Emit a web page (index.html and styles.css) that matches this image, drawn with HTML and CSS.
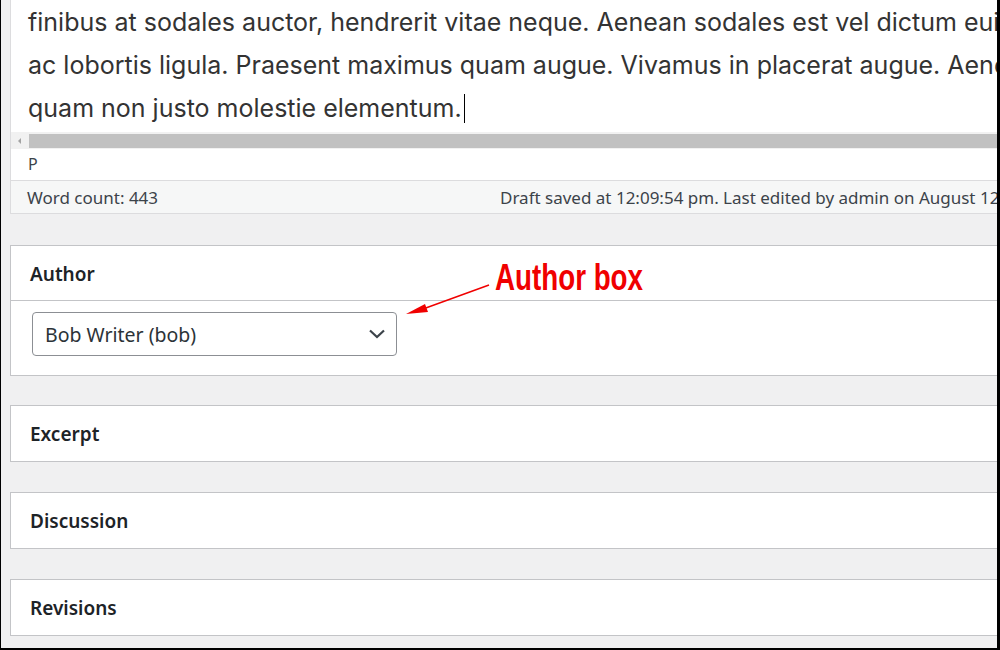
FILE: index.html
```html
<!DOCTYPE html>
<html>
<head>
<meta charset="utf-8">
<link rel="stylesheet" href="styles.css">
</head>
<body>
<div class="frame">
  <div class="column">
    <div class="editor">
      <div class="content">
        <div class="line">finibus at sodales auctor, hendrerit vitae neque. Aenean sodales est vel dictum euismod. Donec at</div>
        <div class="line">ac lobortis ligula. Praesent maximus quam augue. Vivamus in placerat augue. Aenean non</div>
        <div class="line">quam non justo molestie elementum.<span class="caret"></span></div>
      </div>
      <div class="hscroll">
        <span class="scroll-arrow"></span>
        <span class="scroll-thumb"></span>
      </div>
      <div class="pathbar">p</div>
      <div class="statusbar">
        <span class="wordcount">Word count: 443</span>
        <span class="draft">Draft saved at 12:09:54 pm. Last edited by admin on August 12, 2020 at 11:48 am</span>
      </div>
    </div>

    <div class="postbox author-box">
      <div class="postbox-header"><h2>Author</h2></div>
      <div class="postbox-body">
        <div class="select">
          <span>Bob Writer (bob)</span>
          <svg class="chevron" width="18" height="12" viewBox="0 0 18 12"><path d="M2 2.5 L9 9 L16 2.5" fill="none" stroke="#3c434a" stroke-width="2.2"/></svg>
        </div>
      </div>
      <div class="annotation">
        <span class="annotation-label">Author box</span>
        <svg class="annotation-arrow" width="100" height="40" viewBox="0 0 100 40">
          <line x1="84" y1="5" x2="18" y2="29" stroke="#f00000" stroke-width="1.6"/>
          <polygon points="1,34 20,24 23,32" fill="#f00000"/>
        </svg>
      </div>
    </div>

    <div class="postbox excerpt-box"><div class="postbox-header closed"><h2>Excerpt</h2></div></div>
    <div class="postbox"><div class="postbox-header closed"><h2>Discussion</h2></div></div>
    <div class="postbox"><div class="postbox-header closed"><h2>Revisions</h2></div></div>
  </div>
</div>
</body>
</html>
```

FILE: styles.css
```css
html, body {
  margin: 0;
  padding: 0;
  background: #f0f0f1;
}
.frame {
  box-sizing: border-box;
  width: 1000px;
  height: 650px;
  border-left: 1px solid #000;
  border-right: 3px solid #000;
  border-bottom: 2px solid #000;
  overflow: hidden;
  background: #f0f0f1;
}
.column {
  width: 1100px;
  padding-left: 9px;
  display: flex;
  flex-direction: column;
}
.editor {
  background: #fff;
  border-left: 1px solid #dcdcde;
  border-right: 1px solid #dcdcde;
  border-bottom: 1px solid #dcdcde;
  display: flex;
  flex-direction: column;
}
.content {
  height: 132px;
  padding: 1px 0 0 17px;
  box-sizing: border-box;
  font-family: Inter, "Noto Sans", sans-serif;
  font-size: 25px;
  line-height: 43px;
  color: #333;
  overflow: hidden;
}
.line {
  white-space: nowrap;
}
.caret {
  display: inline-block;
  width: 1px;
  height: 29px;
  background: #000;
  vertical-align: -6px;
  margin-left: 2px;
}
.hscroll {
  height: 17px;
  background: #f1f1f1;
  display: flex;
  align-items: center;
}
.scroll-arrow {
  width: 0;
  height: 0;
  margin-left: 7px;
  border-top: 3px solid transparent;
  border-bottom: 3px solid transparent;
  border-right: 3px solid #a3a3a3;
}
.scroll-thumb {
  flex: 1;
  height: 14px;
  background: #c1c1c1;
  margin-left: 8px;
}
.pathbar {
  height: 31px;
  line-height: 31px;
  padding-left: 17px;
  font-family: "Noto Sans", "Open Sans", sans-serif;
  font-size: 16px;
  color: #3c434a;
  text-transform: uppercase;
}
.statusbar {
  height: 32px;
  border-top: 1px solid #dcdcde;
  background: #f6f7f7;
  display: flex;
  align-items: center;
  font-family: "Noto Sans", "Open Sans", sans-serif;
  font-size: 17px;
  color: #3c434a;
  white-space: nowrap;
}
.wordcount {
  flex: 0 0 489px;
  padding-left: 16px;
  box-sizing: border-box;
}
.postbox {
  background: #fff;
  border: 1px solid #c3c4c7;
  margin-top: 30px;
  position: relative;
}
.author-box {
  margin-top: 31px;
}
.excerpt-box {
  margin-top: 29px;
}
.postbox-header {
  height: 54px;
  box-sizing: border-box;
  padding: 3px 0 0 19px;
  border-bottom: 1px solid #c3c4c7;
}
.postbox-header.closed {
  border-bottom: none;
  height: 55px;
}
.postbox-header h2 {
  margin: 0;
  font-family: "Noto Sans", "Open Sans", sans-serif;
  font-weight: 600;
  font-size: 19px;
  line-height: 51px;
  color: #1d2327;
}
.author-box .postbox-header {
  height: 55px;
}
.postbox-body {
  padding: 11px 0 19px 21px;
}
.select {
  box-sizing: border-box;
  width: 365px;
  height: 44px;
  border: 1px solid #8c8f94;
  border-radius: 4px;
  display: flex;
  align-items: center;
  justify-content: space-between;
  padding: 0 10px 0 12px;
  font-family: "Noto Sans", "Open Sans", sans-serif;
  font-size: 19.5px;
  color: #2c3338;
}
.chevron {
  display: block;
}
.annotation {
  position: absolute;
  left: 394px;
  top: 10px;
  width: 260px;
  height: 70px;
}
.annotation-label {
  position: absolute;
  left: 90px;
  top: 0;
  font-family: "Liberation Sans", Arial, sans-serif;
  font-weight: bold;
  font-size: 37px;
  line-height: 44px;
  color: #f00000;
  white-space: nowrap;
  transform: scaleX(0.75);
  transform-origin: left top;
}
.annotation-arrow {
  position: absolute;
  left: 0;
  top: 24px;
}
```
